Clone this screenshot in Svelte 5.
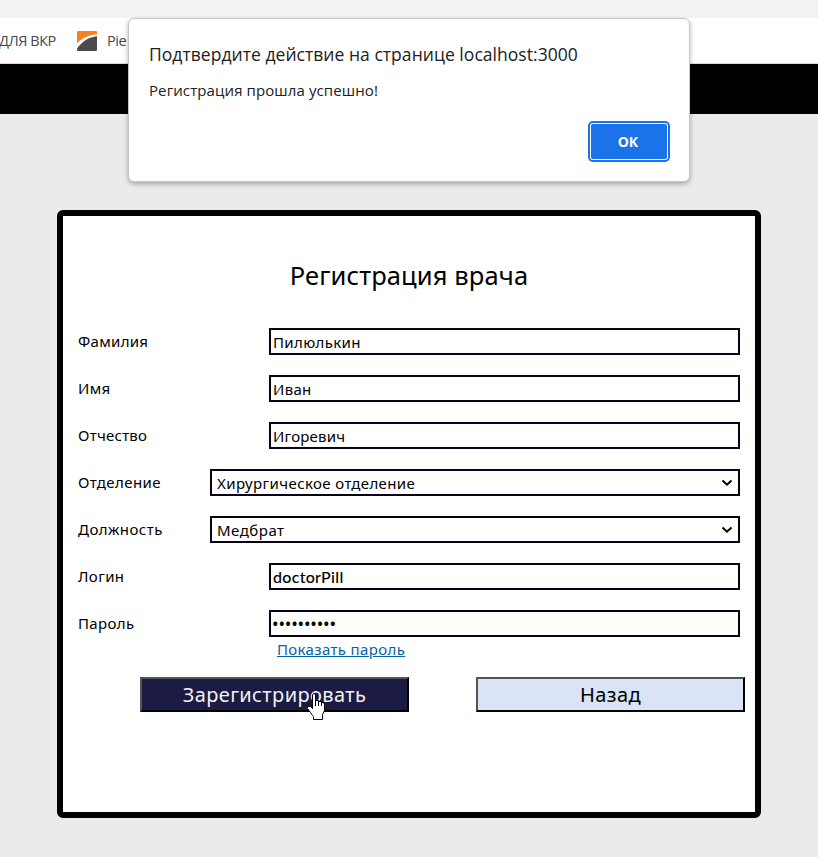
<script>
  // ls / vs: letter spacing of the label and of the value, in pixels
  const fields = [
    { label: 'Фамилия', value: 'Пилюлькин', kind: 'text', ls: 0.3, vs: 0.35 },
    { label: 'Имя', value: 'Иван', kind: 'text', ls: 0.3, vs: 0.3 },
    { label: 'Отчество', value: 'Игоревич', kind: 'text', ls: 0.25, vs: 0.2 },
    { label: 'Отделение', value: 'Хирургическое отделение', kind: 'select', ls: 0.45, vs: 0.4 },
    { label: 'Должность', value: 'Медбрат', kind: 'select', ls: 0.45, vs: 0.5 },
    { label: 'Логин', value: 'doctorPill', kind: 'latin', ls: 0.4, vs: 0.3 },
    { label: 'Пароль', value: '••••••••••', kind: 'dots', ls: 0.35, vs: -0.2 }
  ];
</script>

<div class="page">
  <div class="strip"></div>
  <div class="bookmarks">
    <span class="bm first">ДЛЯ ВКР</span>
    <svg class="fav" width="20" height="20" viewBox="0 0 20 20">
      <path d="M1 0H19Q20 0 20 1V3.500C12 3.800 5 7 0 12.500V1Q0 0 1 0Z" fill="#f58220" />
      <path d="M20 5.300V19Q20 20 19 20H1Q0 20 0 19V17.500C5 10.500 12 6 20 5.300Z" fill="#4a4a4a" />
    </svg>
    <span class="bm">Pie</span>
  </div>
  <div class="nav"></div>
  <main>
    <section class="card">
      <h1>Регистрация врача</h1>
      <div class="rows">
        {#each fields as f}
          <div class="row">
            <span class="label" style="letter-spacing:{f.ls}px">{f.label}</span>
            <div class="box {f.kind}">
              <span style="letter-spacing:{f.vs}px">{f.value}</span>
              {#if f.kind === 'select'}
                <svg width="12" height="8" viewBox="0 0 12 8"><path d="M1.500 1.500L6 5.700L10.500 1.500" fill="none" stroke="#000" stroke-width="2" /></svg>
              {/if}
            </div>
          </div>
        {/each}
      </div>
      <a class="show" href="#show">Показать пароль</a>
      <div class="buttons">
        <button class="primary">Зарегистрировать</button>
        <button class="back">Назад</button>
      </div>
    </section>
  </main>

  <div class="dialog">
    <div class="dtitle">Подтвердите действие на странице localhost:3000</div>
    <div class="dtext">Регистрация прошла успешно!</div>
    <button class="ok">ОК</button>
  </div>

  <svg class="cursor" width="18" height="28" viewBox="0 0 18 28">
    <path d="M5.500 22.500L3.500 19.500L.5 15.500V13.500H3.500L5.500 15.500V2L6.500 .5H7.500L8.500 2V7.500H11.500V8.500H14.500V9.500H16.500L17.500 11.500V17.500L15.500 21.500V26.500H6.500V23.500Z" fill="#fff" stroke="#000" />
    <path d="M8.500 7V13M11.500 8V13M14.500 9V13" stroke="#000" />
  </svg>
</div>

<style>
  :global(body) { margin: 0; }
  .page { position: relative; width: 818px; height: 857px; overflow: hidden; background: #ebebeb; color: #000; font-family: "Noto Sans", sans-serif; display: flex; flex-direction: column; }
  .strip { height: 18px; background: #f1f3f4; }
  .bookmarks { height: 45px; background: #fff; border-bottom: 1px solid #dcdcdc; display: flex; align-items: center; white-space: nowrap; }
  .bm { font: 14.5px/20px "Open Sans", sans-serif; letter-spacing: -0.45px; color: #45484c; }
  .first { width: 77px; margin-left: -1px; }
  .fav { margin-right: 10px; margin-left: 1px; }
  .nav { height: 50px; background: #000; }
  main { display: flex; padding: 96px 57px 0; }
  .card { box-sizing: border-box; width: 704px; height: 608px; border: 6px solid #000; border-radius: 6px; background: #fff; display: flex; flex-direction: column; }
  h1 { margin: 42px 0 0; height: 35px; text-align: center; font-size: 25.5px; line-height: 34px; font-weight: 400; letter-spacing: 0.12px; }
  .rows { padding: 35px 15px 0; display: flex; flex-direction: column; gap: 20px; }
  .row { height: 27px; display: flex; justify-content: space-between; }
  .label { font-size: 15px; line-height: 26px; }
  .box { box-sizing: border-box; width: 471px; height: 27px; border: 2px solid #0d001a; padding: 1px 2px 0; font-size: 15px; line-height: 23px; display: flex; justify-content: space-between; white-space: nowrap; }
  .select { width: 530px; padding: 1px 5px 0; }
  .select svg { margin: 7px 0 0; }
  .latin { font-family: Lato, sans-serif; font-weight: 500; font-size: 16px; padding-top: 0; }
  .dots { padding: 0 1px; font-size: 17.5px; }
  .show { align-self: flex-start; margin: 1px 0 0 214px; font-size: 15px; line-height: 22px; letter-spacing: 0.35px; color: #0563a8; }
  .buttons { display: flex; justify-content: flex-end; gap: 67px; padding: 17px 10px 0; }
  .buttons button { width: 269px; height: 35px; padding: 0; border: 2px outset #000; font: 20px/30px "Noto Sans", sans-serif; letter-spacing: 0.4px; }
  .primary { background: #1b1b43; color: #f2f2f2; }
  .back { background: #dbe3f6; color: #000; }
  .dialog { position: absolute; left: 128px; top: 18px; box-sizing: border-box; width: 562px; height: 164px; padding: 23px 20px 20px; border: 1px solid #c6c6c6; border-radius: 6px; background: #fff; box-shadow: 0 2px 5px rgba(0,0,0,.3); display: flex; flex-direction: column; font-family: "Open Sans", sans-serif; color: #202124; white-space: nowrap; }
  .dtitle { font-size: 17.5px; line-height: 24px; letter-spacing: 0.04px; }
  .dtext { font-size: 15px; line-height: 20px; margin-top: 14px; letter-spacing: 0.1px; }
  .ok { align-self: flex-end; margin: 24px 2px 0 0; width: 76px; height: 35px; padding: 0 2px 0 0; border: 0; border-radius: 2px; background: #1a73e8; color: #fff; font: 700 14px "Open Sans", sans-serif; box-shadow: 0 0 0 1px #fff, 0 0 0 3px #1a73e8; }
  .cursor { position: absolute; left: 307px; top: 693px; }
</style>
